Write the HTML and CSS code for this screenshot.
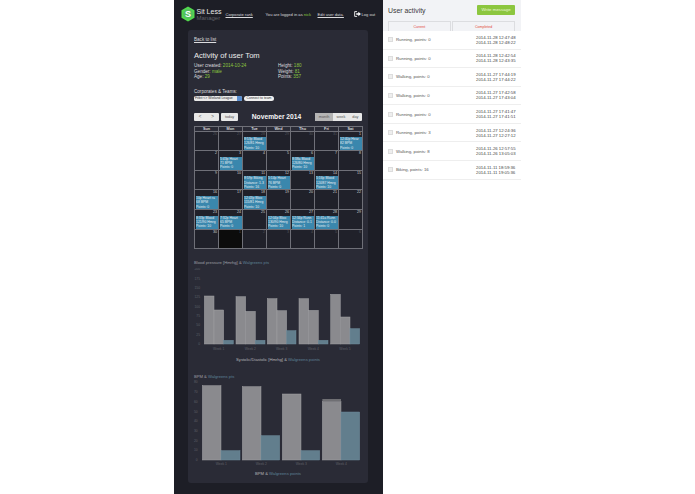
FILE: index.html
```html
<!DOCTYPE html>
<html lang="en">
<head>
<meta charset="utf-8">
<title>Sit Less Manager</title>
<link rel="stylesheet" href="styles.css">
</head>
<body>
<div class="page">
  <main class="side">
    <header class="top">
      <svg class="logo" viewBox="0 0 14 16" width="14" height="16"><path d="M7 .5 13.5 4.2V11.8L7 15.5 .5 11.8V4.2Z" fill="#52d94e"/><circle cx="7" cy="8" r="5" fill="#55c060"/></svg>
      <span class="logo-s">S</span>
      <div class="brand"><div class="brand-a">Sit Less</div><div class="brand-b">Manager</div></div>
      <a class="rank">Corporate rank</a>
      <span class="logged">You are logged in as <b>nick</b></span>
      <a class="edit">Edit user data.</a>
      <span class="logout"><svg viewBox="0 0 8 7" width="7" height="6"><path d="M3.5 .7H.7V6.3H3.5" fill="none" stroke="#fff"/><path d="M2.5 2.6H5V1L8 3.5 5 6V4.4H2.5Z" fill="#fff"/></svg>Log out</span>
    </header>
    <section class="panel">
      <a class="back">Back to list</a>
      <h1>Activity of user Tom</h1>
      <div class="info">
        <div><div>User created: <b>2014-10-24</b></div><div>Gender: <b>male</b></div><div>Age: <b>29</b></div></div>
        <div><div>Height: <b>180</b></div><div>Weight: <b>81</b></div><div>Points: <b>357</b></div></div>
      </div>
      <div class="teams-label">Corporates &amp; Teams:</div>
      <div class="teams"><span class="select">Fitbit &lt;&gt; Wieland League<i></i></span><span class="connect">Connect to team</span></div>
      <div class="toolbar">
        <span class="btn pair"><span>&lt;</span><span>&gt;</span></span>
        <span class="btn today">today</span>
        <h2>November 2014</h2>
        <span class="btn views"><span class="on">month</span><span>week</span><span>day</span></span>
      </div>
      <div class="cal">
        <div class="dow">Sun</div><div class="dow">Mon</div><div class="dow">Tue</div><div class="dow">Wed</div><div class="dow">Thu</div><div class="dow">Fri</div><div class="dow">Sat</div>

        <div class="cell dim">26</div><div class="cell dim">27</div>
        <div class="cell dim">28<div class="ev">8:53p Blood<br>126/81 Hmrg<br>Points: 10</div></div>
        <div class="cell dim">29</div><div class="cell dim">30</div><div class="cell dim">31</div>
        <div class="cell">1<div class="ev">12:40p Hear<br>82 BPM<br>Points: 0</div></div>

        <div class="cell">2</div>
        <div class="cell">3<div class="ev">5:43p Heart<br>71 BPM<br>Points: 0</div></div>
        <div class="cell">4</div><div class="cell">5</div>
        <div class="cell">6<div class="ev">8:38a Blood<br>126/80 Hmrg<br>Points: 10</div></div>
        <div class="cell">7</div><div class="cell">8</div>

        <div class="cell">9</div><div class="cell">10</div>
        <div class="cell">11<div class="ev">8:59p Biking<br>Distance: 1.3<br>Points: 16</div></div>
        <div class="cell">12<div class="ev">5:14p Heart<br>76 BPM<br>Points: 0</div></div>
        <div class="cell">13</div>
        <div class="cell">14<div class="ev">5:16p Blood<br>124/87 Hmrg<br>Points: 10</div></div>
        <div class="cell">15</div>

        <div class="cell">16<div class="ev">10p Heart ra<br>68 BPM<br>Points: 0</div></div>
        <div class="cell">17</div>
        <div class="cell">18<div class="ev">12:43p Bloo<br>115/81 Hmrg<br>Points: 10</div></div>
        <div class="cell">19</div><div class="cell">20</div><div class="cell">21</div><div class="cell">22</div>

        <div class="cell">23<div class="ev">8:33p Blood<br>121/90 Hmrg<br>Points: 10</div></div>
        <div class="cell">24<div class="ev">7:32p Heart<br>65 BPM<br>Points: 0</div></div>
        <div class="cell">25</div>
        <div class="cell">26<div class="ev">12:04p Bloo<br>130/90 Hmrg<br>Points: 10</div></div>
        <div class="cell">27<div class="ev">12:34p Runn<br>Distance: 0.1<br>Points: 1</div></div>
        <div class="cell">28<div class="ev">11:41a Runn<br>Distance: 0.0<br>Points: 0</div></div>
        <div class="cell">29</div>

        <div class="cell">30</div><div class="cell dim black">1</div><div class="cell dim">2</div><div class="cell dim">3</div><div class="cell dim">4</div><div class="cell dim">5</div><div class="cell dim">6</div>
      </div>

      <div class="chart-title one">Blood pressure [Hmrhg] &amp; <em>Walgreens pts</em></div>
      <svg class="chart first" viewBox="0 0 570 262" width="190" height="87.33">
        <g class="ax"><text x="45" y="6.5">200</text><text x="45" y="34.7">175</text><text x="45" y="62.8">150</text><text x="45" y="91">125</text><text x="45" y="119">100</text><text x="45" y="147.2">75</text><text x="45" y="175.3">50</text><text x="45" y="203.4">25</text><text x="45" y="231.5">0</text></g>
        <g class="bg">
          <rect x="58" y="84" width="29" height="144"/><rect x="87" y="126" width="29" height="102"/>
          <rect x="153" y="86" width="29" height="142"/><rect x="182" y="130" width="29" height="98"/>
          <rect x="247" y="92" width="29" height="136"/><rect x="276" y="128" width="29" height="100"/>
          <rect x="342" y="92" width="29" height="136"/><rect x="371" y="127" width="29" height="101"/>
          <rect x="437" y="79" width="29" height="149"/><rect x="466" y="147" width="29" height="81"/>
        </g>
        <g class="bb">
          <rect x="116" y="217" width="29" height="11"/><rect x="211" y="217" width="29" height="11"/><rect x="305" y="188" width="28" height="40"/><rect x="400" y="217" width="29" height="11"/><rect x="495" y="182" width="29" height="46"/>
        </g>
        <g class="wk"><text x="101" y="245.5">Week 1</text><text x="196" y="245.5">Week 2</text><text x="290" y="245.5">Week 3</text><text x="385" y="245.5">Week 4</text><text x="480" y="245.5">Week 5</text></g>
      </svg>
      <div class="legend first">Systolic/Diastolic [Hmrhg] &amp; <em>Walgreens points</em></div>

      <div class="chart-title two">BPM &amp; <em>Walgreens pts</em></div>
      <svg class="chart second" viewBox="0 0 570 262" width="190" height="87.33">
        <g class="ax"><text x="38" y="13.5">80</text><text x="38" y="43">70</text><text x="38" y="72">60</text><text x="38" y="101">50</text><text x="38" y="130">40</text><text x="38" y="159.2">30</text><text x="38" y="188.3">20</text><text x="38" y="217.4">10</text><text x="38" y="246.5">0</text></g>
        <g class="bg">
          <rect x="52" y="20" width="56" height="223"/><rect x="172" y="23" width="56" height="220"/><rect x="292" y="45" width="56" height="198"/><rect x="412" y="67" width="56" height="176"/>
        </g>
        <rect class="band" x="412" y="60" width="56" height="7"/>
        <g class="bb">
          <rect x="108" y="215" width="57" height="28"/><rect x="228" y="170" width="56" height="73"/><rect x="348" y="215" width="56" height="28"/><rect x="468" y="99" width="56" height="144"/>
        </g>
        <g class="wk"><text x="109" y="259.5">Week 1</text><text x="229" y="259.5">Week 2</text><text x="349" y="259.5">Week 3</text><text x="469" y="259.5">Week 4</text></g>
      </svg>
      <div class="legend second">BPM &amp; <em>Walgreens points</em></div>
    </section>
  </main>
  <aside class="right">
    <div class="right-head">
      <div class="right-title"><span>User activity</span><a class="write">Write message</a></div>
      <div class="tabs"><span>Current</span><span>Completed</span></div>
    </div>
    <div class="row"><span class="check"></span><span class="name">Running, points: 0</span><span class="times">2014-11-28 12:47:48<br>2014-11-28 12:48:22</span></div>
    <div class="row"><span class="check"></span><span class="name">Running, points: 0</span><span class="times">2014-11-28 12:42:54<br>2014-11-28 12:43:35</span></div>
    <div class="row"><span class="check"></span><span class="name">Walking, points: 0</span><span class="times">2014-11-27 17:44:19<br>2014-11-27 17:44:22</span></div>
    <div class="row"><span class="check"></span><span class="name">Walking, points: 0</span><span class="times">2014-11-27 17:42:58<br>2014-11-27 17:43:04</span></div>
    <div class="row"><span class="check"></span><span class="name">Running, points: 0</span><span class="times">2014-11-27 17:41:47<br>2014-11-27 17:41:51</span></div>
    <div class="row"><span class="check"></span><span class="name">Running, points: 3</span><span class="times">2014-11-27 12:24:36<br>2014-11-27 12:27:12</span></div>
    <div class="row"><span class="check"></span><span class="name">Walking, points: 8</span><span class="times">2014-11-26 12:57:55<br>2014-11-26 13:05:03</span></div>
    <div class="row"><span class="check"></span><span class="name">Biking, points: 16</span><span class="times">2014-11-11 18:59:36<br>2014-11-11 19:05:36</span></div>
  </aside>
</div>
</body>
</html>
```
FILE: styles.css
```css
html, body { margin: 0; height: 100%; background: #fff; overflow: hidden; }
body { font-family: "Liberation Sans", Arial, sans-serif; font-size: 4.6px; color: #dcdcdf; }
.page { display: flex; margin-left: 174px; height: 494px; overflow: hidden; }

.side { width: 209px; flex: none; background: #1d1e26; box-sizing: border-box; padding: 0 15px 0 14px; }
.top { position: relative; display: flex; align-items: center; height: 30px; box-sizing: border-box; padding: 0 0 2px 0; margin-left: -7px; margin-right: -8px; font-size: 4.1px; white-space: nowrap; }
.logo { flex: none; }
.logo-s { position: absolute; left: 3.5px; top: 9px; width: 7px; text-align: center; font-weight: bold; font-size: 9px; line-height: 10px; color: #fff; }
.brand { margin-left: 1.5px; width: 29px; flex: none; }
.brand-a { font-size: 7px; line-height: 7px; color: #e8e8e8; }
.brand-b { font-size: 6px; line-height: 6px; color: #5f6068; }
.rank, .edit, .back { text-decoration: underline; color: #dcdcdf; }
.rank { width: 40px; flex: none; }
.logged { width: 52px; flex: none; }
.logged b { font-weight: normal; color: #8cc63f; }
.edit { width: 36px; flex: none; }
.logout { display: flex; align-items: center; gap: 1px; }

.panel { background: #2a2b36; border-radius: 3px; height: 453px; box-sizing: border-box; padding: 7px 6px; }
.back { display: block; line-height: 5px; }
h1 { margin: 9px 0 0; font-size: 7.6px; line-height: 9px; font-weight: normal; color: #ebebeb; }
.info { display: grid; grid-template-columns: 84px 1fr; margin-top: 3px; line-height: 5.5px; }
.info b { font-weight: normal; color: #8cc63f; }
.teams-label { margin-top: 9px; line-height: 6px; }
.teams { display: flex; gap: 2px; margin-top: 1px; }
.select { position: relative; width: 48px; height: 5px; background: #e8e8e8; border-radius: 1.5px; color: #333; font-size: 3.4px; line-height: 5px; padding-left: 1px; box-sizing: border-box; }
.select i { position: absolute; right: 0; top: 0; width: 5px; height: 5px; background: #5b8fd0; border-radius: 0 1.5px 1.5px 0; }
.connect { width: 30px; height: 5px; background: #f0f0f0; border-radius: 2.5px; color: #333; font-size: 3.4px; line-height: 5px; text-align: center; }

.toolbar { position: relative; display: flex; align-items: center; gap: 2.5px; margin-top: 12px; height: 8px; }
.btn { display: flex; height: 8px; background: #e8e8e8; color: #555; border-radius: 1px; font-size: 3.8px; line-height: 8px; overflow: hidden; }
.pair { width: 25px; }
.pair span { flex: 1; text-align: center; font-size: 4.6px; }
.today { width: 16.5px; justify-content: center; }
h2 { margin: 0; width: 73px; text-align: center; font-size: 6.7px; line-height: 8px; color: #f5f5f5; font-weight: bold; }
.views { margin-left: auto; width: 47px; }
.views span { flex: auto; text-align: center; }
.views .on { background: #b4b4b4; color: #555; }

.cal { display: grid; grid-template-columns: repeat(7, 24px); grid-template-rows: 5px repeat(6, 19.67px); margin-top: 5px; width: 168px; border-right: .5px solid #6f7078; border-bottom: .5px solid #6f7078; }
.dow, .cell { box-sizing: border-box; border-left: .5px solid #6f7078; border-top: .5px solid #6f7078; overflow: hidden; }
.dow { text-align: center; font-size: 3.8px; line-height: 4.5px; font-weight: bold; color: #dcdcdf; }
.cell { background: #20212a; font-size: 3.6px; line-height: 5.5px; text-align: right; padding-right: 1px; color: #cfcfd2; }
.dim { color: #55565f; }
.black { background: #0c0c0c; }
.ev { margin: 0 -.6px 0 .5px; height: 13.5px; box-sizing: border-box; background: #3a87ad; color: #e6eef2; font-size: 3.4px; line-height: 4.4px; text-align: left; padding-left: .5px; overflow: hidden; white-space: nowrap; }

.chart-title { font-size: 4.15px; line-height: 5px; color: #9d9ea4; }
.chart-title em, .legend em { font-style: normal; color: #5e8296; }
.chart-title.one { margin-top: 11px; }
.chart-title.two { margin-top: 12px; }
.chart { display: block; margin-left: -9px; }
.chart.first { margin-top: 2.8px; }
.ax text { font-size: 10px; fill: #5f6068; text-anchor: end; font-family: "Liberation Sans", Arial, sans-serif; }
.wk text { font-size: 10px; fill: #5f6068; text-anchor: middle; font-family: "Liberation Sans", Arial, sans-serif; }
.bg rect { fill: #8a8a8e; stroke: #a0a0a3; stroke-width: 1.5; }
.bb rect { fill: #627e8d; stroke: #6e8b9b; stroke-width: 1.5; }
.band { fill: #6f6f73; }
.legend { text-align: center; font-size: 4.15px; line-height: 5px; color: #b4b5b9; }
.legend.first { margin-top: 1px; }
.legend.second { margin-top: 5.6px; }

.right { width: 138px; flex: none; color: #444; }
.right-head { background: #f2f3f6; height: 31px; box-sizing: border-box; padding: 5px 6px 0 5px; }
.right-title { display: flex; justify-content: space-between; align-items: center; height: 10px; font-size: 6.9px; color: #3a3a3a; }
.write { width: 38px; height: 10px; background: #8cc63f; color: #eaf6d6; font-size: 4.4px; line-height: 10px; text-align: center; border-radius: 1px; }
.tabs { display: flex; gap: 1.5px; margin-top: 5.5px; height: 10.5px; }
.tabs span { flex: 1; border: .5px solid #dcdde0; border-bottom: 0; text-align: center; font-size: 3.6px; line-height: 10px; color: #e2483c; }
.row { display: flex; align-items: center; height: 18.57px; box-sizing: border-box; padding: 0 5px 0 5px; border-bottom: .5px solid #eeeeee; font-size: 4.3px; color: #555; }
.check { width: 5px; height: 5px; background: #eee; border: .5px solid #ddd; box-sizing: border-box; margin-right: 3px; }
.name { flex: 1; }
.times { width: 40px; line-height: 5px; color: #444; white-space: nowrap; }
```
